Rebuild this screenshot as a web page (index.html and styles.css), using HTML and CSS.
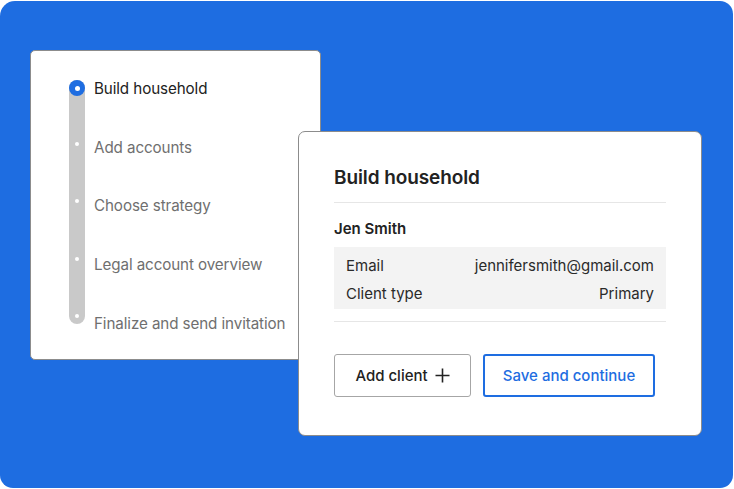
FILE: index.html
```html
<!DOCTYPE html>
<html lang="en">
<head>
<meta charset="utf-8">
<title>Build household</title>
<link rel="stylesheet" href="styles.css">
</head>
<body>
<div class="stage">
  <div class="steps-card">
    <div class="track">
      <span class="dot-active"></span>
      <div class="dots">
        <span class="dot"></span>
        <span class="dot"></span>
        <span class="dot"></span>
        <span class="dot"></span>
      </div>
    </div>
    <ul class="steps">
      <li class="step current">Build household</li>
      <li class="step">Add accounts</li>
      <li class="step">Choose strategy</li>
      <li class="step">Legal account overview</li>
      <li class="step">Finalize and send invitation</li>
    </ul>
  </div>
  <div class="form-card">
    <h2 class="title">Build household</h2>
    <div class="client-name">Jen Smith</div>
    <div class="details">
      <div class="row"><span>Email</span><span>jennifersmith@gmail.com</span></div>
      <div class="row"><span>Client type</span><span>Primary</span></div>
    </div>
    <div class="actions">
      <button class="btn btn-secondary">Add client
        <svg class="plus" width="15" height="15" viewBox="0 0 15 15"><path d="M7.5 0.5v14M0.5 7.5h14" stroke="#222" stroke-width="1.6" fill="none"/></svg>
      </button>
      <button class="btn btn-primary">Save and continue</button>
    </div>
  </div>
</div>
</body>
</html>
```
FILE: styles.css
```css
* { box-sizing: border-box; }
html, body { margin: 0; padding: 0; background: #ffffff; }
body { font-family: Inter, "Noto Sans", sans-serif; }
.stage {
  position: relative;
  width: 733px;
  height: 487px;
  margin-top: 1px;
  background: #1e6de1;
  border-radius: 15px 13px 13px 13px;
  padding: 49px 0 0 30px;
}
.steps-card {
  width: 291px;
  height: 310px;
  background: #fff;
  border: 1px solid #8c8c8c;
  border-radius: 5px;
  display: flex;
  align-items: flex-start;
  padding: 29px 0 0 38px;
}
.track {
  flex: none;
  width: 16px;
  height: 244px;
  background: #c9c9c9;
  border-radius: 8px;
  display: flex;
  flex-direction: column;
  align-items: center;
}
.dot-active {
  width: 16px;
  height: 16px;
  border-radius: 50%;
  background: #1e6de1;
  position: relative;
  flex: none;
}
.dot-active::after {
  content: "";
  position: absolute;
  left: 5.5px;
  top: 5.5px;
  width: 5px;
  height: 5px;
  border-radius: 50%;
  background: #fff;
}
.dots {
  display: flex;
  flex-direction: column;
  gap: 53.3px;
  margin-top: 46px;
}
.dot {
  flex: none;
  width: 4px;
  height: 4px;
  border-radius: 50%;
  background: #fff;
}
.steps {
  list-style: none;
  margin: 0;
  padding: 0 0 0 9px;
  display: flex;
  flex-direction: column;
}
.step {
  flex: none;
  height: 58.7px;
  line-height: 18px;
  font-size: 15.2px;
  color: #6f6f6f;
  letter-spacing: -0.1px;
}
.step:last-child { height: 18px; }
.step.current { color: #222; }
.form-card {
  position: absolute;
  left: 298px;
  top: 130px;
  width: 404px;
  height: 305px;
  background: #fff;
  border: 1px solid #8c8c8c;
  border-radius: 7px;
  padding: 33px 35px 0 35px;
}
.title {
  margin: 0;
  font-size: 19px;
  font-weight: 600;
  color: #222;
  line-height: 26px;
  padding-bottom: 11px;
  border-bottom: 1px solid #e6e6e6;
  letter-spacing: -0.1px;
}
.client-name {
  font-size: 15px;
  font-weight: 600;
  color: #222;
  margin-top: 16px;
  line-height: 20px;
}
.details {
  margin-top: 8px;
  background: #f3f3f3;
  padding: 5px 12px 1px 12px;
}
.row {
  display: flex;
  justify-content: space-between;
  font-size: 15px;
  color: #2a2a2a;
  line-height: 28px;
}
.actions {
  margin-top: 12px;
  border-top: 1px solid #e6e6e6;
  padding-top: 32px;
  display: flex;
  gap: 12px;
}
.btn {
  font-family: inherit;
  font-size: 15px;
  height: 43px;
  background: #fff;
  border-radius: 3px;
  display: flex;
  align-items: center;
  justify-content: center;
  gap: 7px;
  cursor: pointer;
}
.btn-secondary {
  width: 137px;
  border: 1px solid #a6a6a6;
  color: #222;
  font-weight: 500;
}
.btn-primary {
  width: 172px;
  border: 2px solid #1e6de1;
  color: #1e6de1;
  font-weight: 500;
}
.plus { display: block; }
```
